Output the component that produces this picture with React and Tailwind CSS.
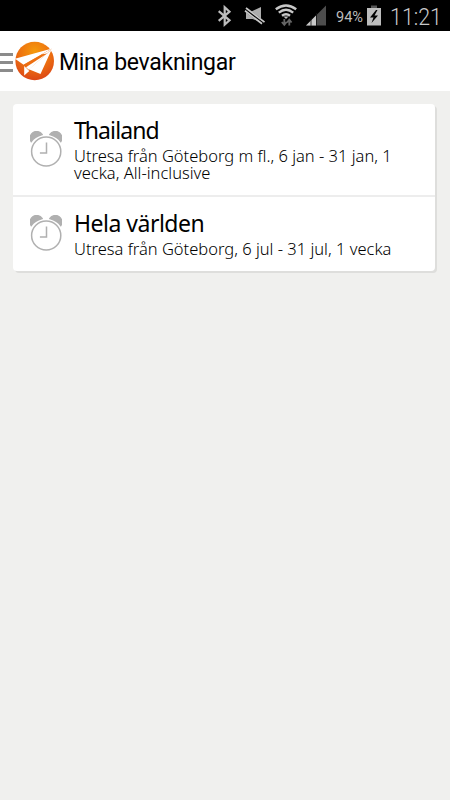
import React from "react";

function StatusBar() {
  return (
    <div className="flex h-[31px] w-full shrink-0 bg-black">
      <svg width="450" height="31" viewBox="0 0 450 31" fill="none">
        <path d="M218.7 11.2 229.5 20.3 224.7 24.5V7.2L229.5 11.7 218.7 20.8" stroke="#bdbdbd" strokeWidth="2.2" />
        <path d="M246 11H252.5L261 7V22L252.5 19H246Z" fill="#adadad" />
        <path d="M245 9 264 23.5" stroke="#000" strokeWidth="4.2" />
        <path d="M246 8 264.5 22.2M245 10.8 262 23.8" stroke="#c8c8c8" strokeWidth="1.7" />
        <path d="M275.8 9.2Q286 1.6 296.2 9.2M278.8 12.6Q286 6.8 293.2 12.6M282 15.8Q286 12.6 290 15.8" stroke="#c8c8c8" strokeWidth="2.4" />
        <path d="M283.5 16.5H288.5L286 19Z" fill="#c0c0c0" />
        <path d="M284.3 19V25M281.8 22 284.3 24.8 286.6 22M289.3 25.5V20M287 22.5 289.3 19.7 291.6 22.5" stroke="#666" strokeWidth="1.8" />
        <path d="M306 25.5 326 5.5V25.5Z" fill="#4d4d4d" />
        <path d="M306 25.5 316 15.5V25.5Z" fill="#c8c8c8" />
        <path d="M311 18V26M316.5 13V26" stroke="#111" strokeWidth=".8" />
        <text x="336" y="22" fontFamily="Roboto, sans-serif" fontSize="14" fill="#bdbdbd" textLength="27" lengthAdjust="spacingAndGlyphs">94%</text>
        <path d="M371 5.5H377V8H371Z" fill="#555" />
        <path d="M367 8H381V25.5H367Z" fill="#bdbdbd" />
        <path d="M376 10 370 17.5H373.5L371.5 23 378 15.5H374.5L377.5 10Z" fill="#000" />
        <text x="390" y="25" fontFamily="Roboto, sans-serif" fontSize="23.5" fontWeight="300" fill="#c9c9c9" textLength="52" lengthAdjust="spacingAndGlyphs">11:21</text>
      </svg>
    </div>
  );
}

function Logo() {
  return (
    <svg className="ml-[2px] shrink-0" width="40" height="40" viewBox="0 0 40 40">
      <defs>
        <radialGradient id="sun" cx=".5" cy=".25" r=".75">
          <stop offset="0" stopColor="#f59a0c" />
          <stop offset=".5" stopColor="#ee7410" />
          <stop offset="1" stopColor="#dc4716" />
        </radialGradient>
      </defs>
      <circle cx="19.7" cy="20" r="19.3" fill="url(#sun)" />
      <path d="M0 17.8 37 7.5 8.6 23.8Z" fill="#fff" />
      <path d="M37 7.8 25.5 33 13.8 28.3 32 12.5Z" fill="#fff" />
      <path d="M9.2 25 14.3 30 9.2 34.6Z" fill="#fff" />
      <path d="M8.6 23.8 37 7.5 32 12.5 11 26.2Z" fill="#ec6b12" opacity=".85" />
      <path d="M11 26.2 31 13.2 13.8 28.7Z" fill="#fff" />
      <path d="M37 7.5 27 13.3 32 12.6Z" fill="#fff" />
    </svg>
  );
}

function AlarmIcon() {
  return (
    <svg className="mt-[27px] shrink-0" width="32" height="36" viewBox="0 0 32 36" fill="none">
      <path d="M1.2 10.5A6.4 6.4 0 0 1 12 3.5Q4.5 5.8 1.2 10.5ZM30.8 10.5A6.4 6.4 0 0 0 20 3.5Q27.5 5.8 30.8 10.5Z" fill="#b0b0b0" stroke="#b0b0b0" strokeWidth="1.5" />
      <circle cx="16.2" cy="20.5" r="15.4" fill="#fff" />
      <circle cx="16.2" cy="20.5" r="14.6" stroke="#b0b0b0" strokeWidth="1.5" />
      <path d="M16.5 11.5V22H9.9" stroke="#b0b0b0" strokeWidth="1.5" />
    </svg>
  );
}

function Watch({ title, titleClass, children, className }) {
  return (
    <div className={"flex pl-[17px] " + className}>
      <AlarmIcon />
      <div className="ml-3 whitespace-nowrap font-['Noto_Sans',sans-serif] text-black">
        <div className={"mt-[13px] h-[30px] text-[23px] leading-[26px] " + titleClass}>{title}</div>
        {children}
      </div>
    </div>
  );
}

const line = "block h-[17px] text-[16.5px] font-light leading-[17px]";

export default function App() {
  return (
    <div className="flex h-[800px] w-[450px] flex-col overflow-hidden bg-[#f0f0ee]">
      <StatusBar />
      <header className="flex h-[60px] shrink-0 items-center bg-white">
        <div className="mt-[2px] flex w-[13px] flex-col gap-[5px]">
          <div className="h-[3px] bg-[#8b8b8b]" />
          <div className="h-[3px] bg-[#8b8b8b]" />
          <div className="h-[3px] bg-[#8b8b8b]" />
        </div>
        <Logo />
        <h1 className="ml-1 mt-[3px] whitespace-nowrap font-[Roboto,sans-serif] text-[23px] leading-[30px] tracking-[-0.28px] text-black">Mina bevakningar</h1>
      </header>
      <main className="ml-[13px] mt-[13px] w-[422px] rounded-[4px] bg-white shadow-[2px_2px_0_#dededc]">
        <Watch title={<><span className="tracking-[-2px]">T</span>hailand</>} titleClass="tracking-[-0.9px]" className="h-[91px]">
          <span className={line}>Utresa från Göteborg m fl., 6 jan - 31 jan, 1</span>
          <span className={line}>vecka, All-inclusive</span>
        </Watch>
        <div className="h-[2px] bg-[#ededed]" />
        <Watch title="Hela världen" titleClass="tracking-[-0.5px]" className="h-[74px] [&>svg]:mt-[18px]">
          <span className={line}>Utresa från Göteborg, 6 jul - 31 jul, 1 vecka</span>
        </Watch>
      </main>
    </div>
  );
}
